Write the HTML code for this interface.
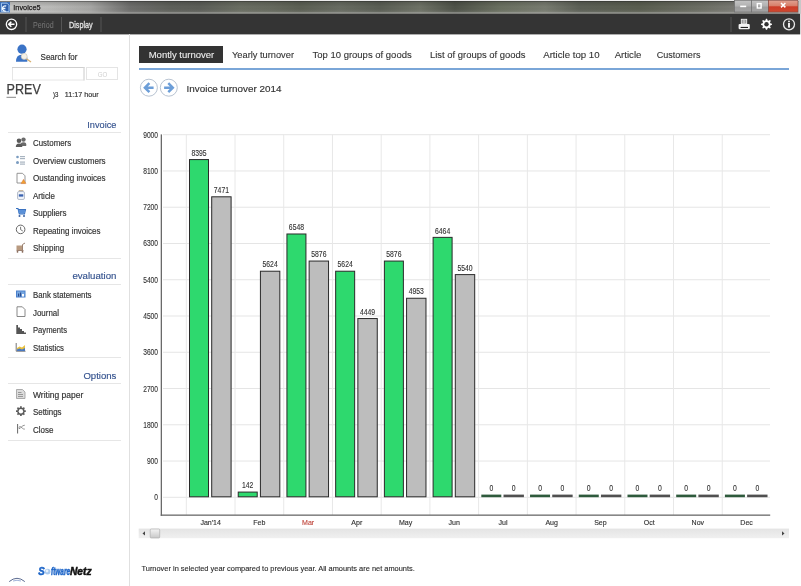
<!DOCTYPE html>
<html><head><meta charset="utf-8">
<style>
html,body{margin:0;padding:0;background:#fff;width:801px;height:586px;overflow:hidden}
svg{display:block;font-family:"Liberation Sans",sans-serif;will-change:transform}
</style></head><body>
<svg width="801" height="586" viewBox="0 0 801 586">
<defs>
<linearGradient id="tb" x1="0" y1="0" x2="801" y2="0" gradientUnits="userSpaceOnUse">
<stop offset="0.0000" stop-color="#c4c4c4"/>
<stop offset="0.0125" stop-color="#c8c8c6"/>
<stop offset="0.0624" stop-color="#bcbcba"/>
<stop offset="0.1124" stop-color="#a8a8a6"/>
<stop offset="0.1373" stop-color="#8a8a88"/>
<stop offset="0.1623" stop-color="#6e6e6c"/>
<stop offset="0.2122" stop-color="#5e605a"/>
<stop offset="0.2497" stop-color="#5c5e58"/>
<stop offset="0.2996" stop-color="#6a6e62"/>
<stop offset="0.3371" stop-color="#666a5e"/>
<stop offset="0.3745" stop-color="#5c6054"/>
<stop offset="0.4245" stop-color="#686c62"/>
<stop offset="0.4744" stop-color="#5a5e54"/>
<stop offset="0.5243" stop-color="#6e7266"/>
<stop offset="0.5680" stop-color="#4e5248"/>
<stop offset="0.6242" stop-color="#6a7060"/>
<stop offset="0.6804" stop-color="#787c70"/>
<stop offset="0.7241" stop-color="#5c6056"/>
<stop offset="0.7990" stop-color="#5a5e50"/>
<stop offset="0.8739" stop-color="#6c6e64"/>
<stop offset="0.9176" stop-color="#7a7a74"/>
<stop offset="1.0000" stop-color="#8a8a88"/>
</linearGradient>
<linearGradient id="tbv" x1="0" y1="0" x2="0" y2="1">
<stop offset="0" stop-color="#000" stop-opacity="0.18"/>
<stop offset="0.5" stop-color="#000" stop-opacity="0"/>
<stop offset="1" stop-color="#fff" stop-opacity="0.15"/>
</linearGradient>
<linearGradient id="btn" x1="0" y1="0" x2="0" y2="1">
<stop offset="0" stop-color="#c4c4c4"/><stop offset="0.5" stop-color="#b0b0b0"/><stop offset="0.55" stop-color="#9c9c9c"/><stop offset="1" stop-color="#a4a4a4"/>
</linearGradient>
<linearGradient id="cls" x1="0" y1="0" x2="0" y2="1">
<stop offset="0" stop-color="#e0a090"/><stop offset="0.45" stop-color="#d8806c"/><stop offset="0.55" stop-color="#cc3c28"/><stop offset="1" stop-color="#d04830"/>
</linearGradient>
<linearGradient id="sb" x1="0" y1="0" x2="0" y2="1">
<stop offset="0" stop-color="#e4e4e4"/><stop offset="1" stop-color="#f0f0f0"/>
</linearGradient>
<linearGradient id="thumb" x1="0" y1="0" x2="0" y2="1"><stop offset="0" stop-color="#f4f4f4"/><stop offset="1" stop-color="#c8c8c8"/></linearGradient>
</defs>

<!-- Title bar -->
<rect x="0" y="0" width="801" height="14" fill="url(#tb)"/>
<rect x="0" y="1" width="801" height="12" fill="url(#tbv)"/>
<rect x="0" y="0" width="801" height="1" fill="#ececec"/>
<rect x="0" y="1" width="801" height="1" fill="#202020" opacity="0.35"/>
<rect x="0" y="12.5" width="801" height="1.2" fill="#a4a4a2"/>
<!-- app icon -->
<rect x="0" y="2" width="10" height="10.4" fill="#3d6fb8"/>
<path d="M1.5 3.2 H7 L9 5.2 V11.6 H1.5 Z" fill="#2f5ea8" stroke="#a8cdf4" stroke-width="0.9"/>
<path d="M6.2 6.2 A2.6 2.6 0 1 0 5.8 11 M2.4 8.5 H5.4" fill="none" stroke="#f0f8ff" stroke-width="1.3"/>
<text x="13.3" y="9.8" font-size="8" fill="#1c1a1a" stroke="#1c1a1a" stroke-width="0.25" textLength="27.3" lengthAdjust="spacingAndGlyphs">Invoice5</text>
<!-- window buttons -->
<rect x="734.5" y="0.5" width="17" height="11.5" fill="url(#btn)" stroke="#707070" stroke-width="0.7"/>
<rect x="740.2" y="5.6" width="6" height="1.6" fill="#fff"/>
<rect x="751.5" y="0.5" width="17" height="11.5" fill="url(#btn)" stroke="#707070" stroke-width="0.7"/>
<rect x="757.3" y="3.6" width="3.8" height="4.4" fill="none" stroke="#fff" stroke-width="1.4"/>
<rect x="768.5" y="0.5" width="29.5" height="11.5" fill="url(#cls)" stroke="#8a4a40" stroke-width="0.7"/>
<path d="M781 3 L785.4 7.4 M785.4 3 L781 7.4" stroke="#fff" stroke-width="1.5"/>
<rect x="798.5" y="0" width="2.5" height="14" fill="#c8c8c8"/>

<!-- Toolbar -->
<rect x="0" y="13.8" width="800" height="20.6" fill="#343434"/>
<rect x="800" y="13.8" width="1" height="20.6" fill="#d8d8d8"/>
<circle cx="11.5" cy="24.3" r="5.2" fill="none" stroke="#fff" stroke-width="1.3"/>
<path d="M14.5 24.3 H9 M11.3 21.8 L8.8 24.3 L11.3 26.8" fill="none" stroke="#fff" stroke-width="1.6"/>
<rect x="25.5" y="17" width="1" height="15" fill="#555"/>
<text x="33" y="27.5" font-size="8.5" fill="#777" textLength="20.6" lengthAdjust="spacingAndGlyphs">Period</text>
<rect x="61" y="17" width="1" height="15" fill="#555"/>
<text x="69" y="27.5" font-size="8.5" fill="#dedede" stroke="#dedede" stroke-width="0.35" textLength="23.7" lengthAdjust="spacingAndGlyphs">Display</text>
<rect x="100.5" y="17" width="1" height="15" fill="#555"/>
<rect x="730.5" y="17" width="1" height="15" fill="#555"/>
<!-- printer -->
<rect x="741.3" y="19.3" width="5.4" height="4.6" fill="#9a9a9a" stroke="#f0f0f0" stroke-width="0.9"/>
<rect x="743.3" y="19.5" width="1.4" height="4" fill="#c8c8c8"/>
<rect x="738.6" y="23.9" width="11.2" height="5.3" rx="1.2" fill="#f4f4f4"/>
<rect x="740.6" y="26.9" width="7.4" height="1.1" fill="#222"/>
<!-- gear -->
<path d="M765.96 18.83 L767.04 18.83 L767.66 20.47 L768.39 20.77 L769.99 20.05 L770.75 20.81 L770.03 22.41 L770.33 23.14 L771.97 23.76 L771.97 24.84 L770.33 25.46 L770.03 26.19 L770.75 27.79 L769.99 28.55 L768.39 27.83 L767.66 28.13 L767.04 29.77 L765.96 29.77 L765.34 28.13 L764.61 27.83 L763.01 28.55 L762.25 27.79 L762.97 26.19 L762.67 25.46 L761.03 24.84 L761.03 23.76 L762.67 23.14 L762.97 22.41 L762.25 20.81 L763.01 20.05 L764.61 20.77 L765.34 20.47 Z" fill="#fff"/>
<circle cx="766.5" cy="24.3" r="2.2" fill="#343434"/>
<!-- info -->
<circle cx="789" cy="24.3" r="5.5" fill="none" stroke="#e8e8e8" stroke-width="1.3"/>
<circle cx="789" cy="21.4" r="0.9" fill="#fff"/>
<rect x="788.1" y="23" width="1.8" height="4.6" fill="#fff"/>

<!-- Sidebar -->
<rect x="129" y="34" width="1" height="552" fill="#e0e0e0"/>
<!-- search person icon -->
<circle cx="22" cy="49.2" r="4.6" fill="#3b73c6"/>
<path d="M16 61.8 Q16 55 21.5 54.8 L24 54.8 Q27.3 55.2 27.3 58 L27.3 61.8 Z" fill="#3b73c6"/>
<line x1="26" y1="58.5" x2="31" y2="62" stroke="#d8b070" stroke-width="1.4"/>
<circle cx="24.2" cy="56.4" r="3" fill="#f4f0e6" stroke="#c8c0b0" stroke-width="0.6"/>
<text x="40.6" y="60.3" font-size="8.2" fill="#333" stroke="#333" stroke-width="0.18" textLength="36.9" lengthAdjust="spacingAndGlyphs">Search for</text>
<rect x="12.5" y="67.5" width="71.5" height="12.5" fill="#fff" stroke="#e6e6e6" stroke-width="1"/>
<rect x="12" y="67" width="72.5" height="1" fill="#cfcfcf"/>
<rect x="83.5" y="67" width="1" height="13.5" fill="#d8d8d8"/>
<rect x="86.5" y="67.5" width="31" height="12" fill="#fff" stroke="#e4e4e4" stroke-width="1"/>
<text x="97.7" y="76.5" font-size="7" fill="#d0d0d0" textLength="9.5" lengthAdjust="spacingAndGlyphs">GO</text>
<text x="6.6" y="94.4" font-size="13.9" fill="#3e3e3e" stroke="#3e3e3e" stroke-width="0.25" textLength="34.2" lengthAdjust="spacingAndGlyphs">PREV</text>
<rect x="6.5" y="96.8" width="9.5" height="1" fill="#888"/>
<text x="53" y="97.3" font-size="7.6" fill="#333" stroke="#333" stroke-width="0.18" textLength="5.4" lengthAdjust="spacingAndGlyphs">)3</text>
<text x="64.7" y="97.3" font-size="7.6" fill="#333" stroke="#333" stroke-width="0.18" textLength="33.9" lengthAdjust="spacingAndGlyphs">11:17 hour</text>

<!-- Invoice section -->
<text x="116.4" y="128" font-size="9.6" fill="#34528e" stroke="#34528e" stroke-width="0.15" text-anchor="end" textLength="29.1" lengthAdjust="spacingAndGlyphs">Invoice</text>
<rect x="8" y="132" width="113" height="1" fill="#e6e6e6"/>
<g font-size="8.7" fill="#333" stroke="#333" stroke-width="0.18">
<text x="33" y="146" textLength="38.2" lengthAdjust="spacingAndGlyphs">Customers</text>
<text x="33" y="163.5" textLength="72.6" lengthAdjust="spacingAndGlyphs">Overview customers</text>
<text x="33" y="181" textLength="72.6" lengthAdjust="spacingAndGlyphs">Oustanding invoices</text>
<text x="33" y="198.5" textLength="22" lengthAdjust="spacingAndGlyphs">Article</text>
<text x="33" y="216" textLength="33.4" lengthAdjust="spacingAndGlyphs">Suppliers</text>
<text x="33" y="233.5" textLength="67.5" lengthAdjust="spacingAndGlyphs">Repeating invoices</text>
<text x="33" y="251" textLength="31.2" lengthAdjust="spacingAndGlyphs">Shipping</text>
</g>
<rect x="8" y="258" width="113" height="1" fill="#e6e6e6"/>
<text x="116.4" y="279.3" font-size="9.6" fill="#34528e" stroke="#34528e" stroke-width="0.15" text-anchor="end" textLength="44" lengthAdjust="spacingAndGlyphs">evaluation</text>
<rect x="8" y="284" width="113" height="1" fill="#e6e6e6"/>
<g font-size="8.7" fill="#333" stroke="#333" stroke-width="0.18">
<text x="33" y="298" textLength="58.5" lengthAdjust="spacingAndGlyphs">Bank statements</text>
<text x="33" y="315.5" textLength="26" lengthAdjust="spacingAndGlyphs">Journal</text>
<text x="33" y="333" textLength="34" lengthAdjust="spacingAndGlyphs">Payments</text>
<text x="33" y="350.5" textLength="31" lengthAdjust="spacingAndGlyphs">Statistics</text>
</g>
<rect x="8" y="357" width="113" height="1" fill="#e6e6e6"/>
<text x="116.4" y="379" font-size="9.6" fill="#34528e" stroke="#34528e" stroke-width="0.15" text-anchor="end" textLength="33" lengthAdjust="spacingAndGlyphs">Options</text>
<rect x="8" y="383" width="113" height="1" fill="#e6e6e6"/>
<g font-size="8.7" fill="#333" stroke="#333" stroke-width="0.18">
<text x="33" y="397.5" textLength="50.3" lengthAdjust="spacingAndGlyphs">Writing paper</text>
<text x="33" y="415" textLength="28.5" lengthAdjust="spacingAndGlyphs">Settings</text>
<text x="33" y="432.5" textLength="20.4" lengthAdjust="spacingAndGlyphs">Close</text>
</g>
<rect x="8" y="440" width="113" height="1" fill="#e6e6e6"/>


<!-- sidebar icons -->
<g id="icons">
<!-- customers: two people -->
<circle cx="23.5" cy="139.6" r="2.2" fill="#6a6a6a"/>
<path d="M19.8 146 Q20 142.3 23.5 142.3 Q27 142.3 26.2 146 Z" fill="#6a6a6a"/>
<circle cx="19" cy="140.8" r="2.3" fill="#5a5a5a"/>
<path d="M15.8 147 Q15.8 143.4 19 143.4 Q22.3 143.4 22.3 147 Z" fill="#5a5a5a"/>
<!-- overview customers -->
<circle cx="17.5" cy="157" r="1.3" fill="#7a9cc0"/>
<circle cx="17.5" cy="162.5" r="1.5" fill="#7a9cc0"/>
<rect x="20" y="156" width="5" height="1.2" fill="#a8b4c0"/>
<rect x="20" y="158" width="5" height="1.2" fill="#a8b4c0"/>
<rect x="20" y="161.5" width="5" height="1.2" fill="#a8b4c0"/>
<rect x="20" y="163.5" width="5" height="1.2" fill="#a8b4c0"/>
<!-- outstanding invoices -->
<path d="M17 173.3 H22.5 L25 175.8 V183 H17 Z" fill="#fff" stroke="#8a8a8a" stroke-width="0.9"/>
<path d="M23.5 179.3 L26 183.6 H21 Z" fill="#f0a030" stroke="#d86a30" stroke-width="0.4"/>
<!-- article jar -->
<rect x="18.8" y="190" width="4.5" height="1.6" fill="#c8b8a0"/>
<rect x="17.5" y="191.5" width="7" height="8" rx="1.5" fill="#eef2f8" stroke="#a8b0c0" stroke-width="0.8"/>
<rect x="18.8" y="194.3" width="4.5" height="2.3" fill="#3a62b0"/>
<!-- suppliers cart -->
<path d="M16 208.5 H18 L19.3 214 H24.5 L25.5 209.5 H18.5" fill="#8ab0e0" stroke="#3a72c0" stroke-width="1.1"/>
<rect x="18.5" y="210" width="6.5" height="3" fill="#5a90d8"/>
<circle cx="19.5" cy="216" r="1" fill="#3a60a0"/>
<circle cx="24" cy="216" r="1" fill="#3a60a0"/>
<!-- repeating clock -->
<circle cx="20.6" cy="229.4" r="4.3" fill="none" stroke="#666" stroke-width="1"/>
<path d="M20.6 226.8 V229.6 L22.8 231" fill="none" stroke="#666" stroke-width="0.9"/>
<!-- shipping -->
<rect x="16.5" y="245.5" width="5.5" height="4.5" fill="#b89a80"/>
<path d="M22.5 251 V244.5 L25 243" fill="none" stroke="#9a8070" stroke-width="1"/>
<rect x="16.5" y="250" width="7" height="1" fill="#9a8070"/>
<circle cx="17.5" cy="251.8" r="0.9" fill="#806050"/>
<circle cx="22.5" cy="251.8" r="0.9" fill="#806050"/>
<!-- bank statements -->
<rect x="16" y="290.5" width="9.5" height="7" fill="#4a80cc"/>
<rect x="17" y="291.5" width="7.5" height="5" fill="#78a8e0"/>
<rect x="18" y="293.5" width="1.2" height="3" fill="#2a4c90"/>
<rect x="20" y="292.5" width="1.2" height="4" fill="#2a4c90"/>
<rect x="22" y="294" width="2" height="2.5" fill="#fff"/>
<!-- journal -->
<path d="M17 306.8 H22.3 L25 309.5 V316.5 H17 Z" fill="#fff" stroke="#7a7a7a" stroke-width="0.9"/>
<!-- payments -->
<path d="M16.3 325 H18 V327.5 H20 V329 H22 V331 H24 V332.5 H26 V334 H16.3 Z" fill="#555"/>
<!-- statistics -->
<path d="M16.2 343 V351.2 H25.5" fill="none" stroke="#666" stroke-width="0.9"/>
<path d="M17 351 L17 348 L19.5 346.5 L22 347.5 L25 345 V351 Z" fill="#e8c040"/>
<path d="M17 351 L17 349.5 L19.5 348.5 L22 349.5 L25 348 V351 Z" fill="#4a78c0"/>
<!-- writing paper -->
<path d="M16.5 389.5 H22.5 L25 392 V398.5 H16.5 Z" fill="#dcdcdc" stroke="#9a9a9a" stroke-width="0.8"/>
<rect x="18" y="392" width="3.5" height="0.8" fill="#888"/>
<rect x="18" y="394" width="5" height="0.8" fill="#888"/>
<rect x="18" y="396" width="5" height="0.8" fill="#888"/>
<!-- settings gear -->
<g transform="translate(20.9 411.2)" fill="#5a5a5a">
<circle r="3.7"/>
<path d="M-0.9 -4.9 H0.9 L0.7 -3 H-0.7 Z"/>
<path d="M-0.9 -4.9 H0.9 L0.7 -3 H-0.7 Z" transform="rotate(45)"/>
<path d="M-0.9 -4.9 H0.9 L0.7 -3 H-0.7 Z" transform="rotate(90)"/>
<path d="M-0.9 -4.9 H0.9 L0.7 -3 H-0.7 Z" transform="rotate(135)"/>
<path d="M-0.9 -4.9 H0.9 L0.7 -3 H-0.7 Z" transform="rotate(180)"/>
<path d="M-0.9 -4.9 H0.9 L0.7 -3 H-0.7 Z" transform="rotate(225)"/>
<path d="M-0.9 -4.9 H0.9 L0.7 -3 H-0.7 Z" transform="rotate(270)"/>
<path d="M-0.9 -4.9 H0.9 L0.7 -3 H-0.7 Z" transform="rotate(315)"/>
<circle r="2.2" fill="#fff"/>
</g>
<!-- close -->
<rect x="17.1" y="424" width="1" height="9.5" fill="#666"/>
<path d="M24.8 425.2 Q22.8 425.2 21.2 427.3 Q20 429 19 428.5 Q18.6 427.2 19.8 426.6 Q21.2 426.6 22.5 428.3 Q23.6 429.3 24.8 429.1" fill="none" stroke="#777" stroke-width="0.8"/>
</g>

<!-- logo -->
<text x="38.3" y="574.6" font-size="10" font-weight="bold" font-style="italic" fill="#1f66c8" stroke="#1f66c8" stroke-width="0.5" textLength="6.5" lengthAdjust="spacingAndGlyphs">S</text>
<circle cx="47.6" cy="571.6" r="2.9" fill="#a8c8ee"/>
<circle cx="47" cy="571" r="1.4" fill="#e8f2fc"/>
<text x="51" y="574.6" font-size="10" font-weight="bold" font-style="italic" fill="#1f66c8" stroke="#1f66c8" stroke-width="0.5" textLength="19" lengthAdjust="spacingAndGlyphs">ftware</text>
<text x="70" y="574.6" font-size="10" font-weight="bold" font-style="italic" fill="#111" stroke="#111" stroke-width="0.5" textLength="21.5" lengthAdjust="spacingAndGlyphs">Netz</text>
<path d="M9.2 581.6 Q17 575 24.8 581.6" fill="none" stroke="#5a6a90" stroke-width="1"/>
<path d="M13 581 Q17 579.5 21 581" fill="none" stroke="#8aa0d0" stroke-width="0.8"/>

<!-- Tabs -->
<rect x="139" y="46" width="84" height="17" fill="#333"/>
<g font-size="9.9" fill="#333" stroke="#333" stroke-width="0.12">
<text x="148.7" y="57.7" fill="#ececec" stroke="#ececec" textLength="65.6" lengthAdjust="spacingAndGlyphs">Montly turnover</text>
<text x="232" y="57.7" textLength="62" lengthAdjust="spacingAndGlyphs">Yearly turnover</text>
<text x="312.5" y="57.7" textLength="99.2" lengthAdjust="spacingAndGlyphs">Top 10 groups of goods</text>
<text x="430" y="57.7" textLength="95.6" lengthAdjust="spacingAndGlyphs">List of groups of goods</text>
<text x="543.2" y="57.7" textLength="56.4" lengthAdjust="spacingAndGlyphs">Article top 10</text>
<text x="614.7" y="57.7" textLength="26.7" lengthAdjust="spacingAndGlyphs">Article</text>
<text x="656.8" y="57.7" textLength="43.6" lengthAdjust="spacingAndGlyphs">Customers</text>
</g>
<rect x="139" y="68" width="650" height="2" fill="#7aa6d8"/>

<!-- nav -->
<circle cx="148.9" cy="87.7" r="8.5" fill="#fff" stroke="#b0bccc" stroke-width="0.9"/>
<path d="M153.6 87.7 H146 M149.4 83.2 L144.9 87.7 L149.4 92.2" fill="none" stroke="#6c9ed8" stroke-width="2.5"/>
<circle cx="168.8" cy="87.7" r="8.5" fill="#fff" stroke="#b0bccc" stroke-width="0.9"/>
<path d="M164.1 87.7 H171.7 M168.3 83.2 L172.8 87.7 L168.3 92.2" fill="none" stroke="#6c9ed8" stroke-width="2.5"/>
<text x="186.6" y="92.1" font-size="9.6" fill="#333" stroke="#333" stroke-width="0.15" textLength="94.8" lengthAdjust="spacingAndGlyphs">Invoice turnover 2014</text>

<g id="chart">
<rect x="163" y="496.80" width="607" height="1" fill="#e5e5e5"/>
<rect x="163" y="460.54" width="607" height="1" fill="#e5e5e5"/>
<rect x="163" y="424.28" width="607" height="1" fill="#e5e5e5"/>
<rect x="163" y="388.02" width="607" height="1" fill="#e5e5e5"/>
<rect x="163" y="351.76" width="607" height="1" fill="#e5e5e5"/>
<rect x="163" y="315.50" width="607" height="1" fill="#e5e5e5"/>
<rect x="163" y="279.24" width="607" height="1" fill="#e5e5e5"/>
<rect x="163" y="242.98" width="607" height="1" fill="#e5e5e5"/>
<rect x="163" y="206.72" width="607" height="1" fill="#e5e5e5"/>
<rect x="163" y="170.46" width="607" height="1" fill="#e5e5e5"/>
<rect x="163" y="134.20" width="607" height="1" fill="#e5e5e5"/>
<rect x="185.80" y="134.5" width="1" height="380.5" fill="#e8e8e8"/>
<rect x="234.52" y="134.5" width="1" height="380.5" fill="#e8e8e8"/>
<rect x="283.24" y="134.5" width="1" height="380.5" fill="#e8e8e8"/>
<rect x="331.96" y="134.5" width="1" height="380.5" fill="#e8e8e8"/>
<rect x="380.68" y="134.5" width="1" height="380.5" fill="#e8e8e8"/>
<rect x="429.40" y="134.5" width="1" height="380.5" fill="#e8e8e8"/>
<rect x="478.12" y="134.5" width="1" height="380.5" fill="#e8e8e8"/>
<rect x="526.84" y="134.5" width="1" height="380.5" fill="#e8e8e8"/>
<rect x="575.56" y="134.5" width="1" height="380.5" fill="#e8e8e8"/>
<rect x="624.28" y="134.5" width="1" height="380.5" fill="#e8e8e8"/>
<rect x="673.00" y="134.5" width="1" height="380.5" fill="#e8e8e8"/>
<rect x="721.72" y="134.5" width="1" height="380.5" fill="#e8e8e8"/>
<rect x="160.7" y="134.4" width="1.3" height="381.4" fill="#6a6a6a"/>
<rect x="160.7" y="514.5" width="609.5" height="1.3" fill="#6a6a6a"/>
<text x="158" y="500.30" font-size="8.4" fill="#333" stroke="#333" stroke-width="0.12" text-anchor="end" textLength="3.7" lengthAdjust="spacingAndGlyphs">0</text>
<text x="158" y="464.04" font-size="8.4" fill="#333" stroke="#333" stroke-width="0.12" text-anchor="end" textLength="11.1" lengthAdjust="spacingAndGlyphs">900</text>
<text x="158" y="427.78" font-size="8.4" fill="#333" stroke="#333" stroke-width="0.12" text-anchor="end" textLength="14.8" lengthAdjust="spacingAndGlyphs">1800</text>
<text x="158" y="391.52" font-size="8.4" fill="#333" stroke="#333" stroke-width="0.12" text-anchor="end" textLength="14.8" lengthAdjust="spacingAndGlyphs">2700</text>
<text x="158" y="355.26" font-size="8.4" fill="#333" stroke="#333" stroke-width="0.12" text-anchor="end" textLength="14.8" lengthAdjust="spacingAndGlyphs">3600</text>
<text x="158" y="319.00" font-size="8.4" fill="#333" stroke="#333" stroke-width="0.12" text-anchor="end" textLength="14.8" lengthAdjust="spacingAndGlyphs">4500</text>
<text x="158" y="282.74" font-size="8.4" fill="#333" stroke="#333" stroke-width="0.12" text-anchor="end" textLength="14.8" lengthAdjust="spacingAndGlyphs">5400</text>
<text x="158" y="246.48" font-size="8.4" fill="#333" stroke="#333" stroke-width="0.12" text-anchor="end" textLength="14.8" lengthAdjust="spacingAndGlyphs">6300</text>
<text x="158" y="210.22" font-size="8.4" fill="#333" stroke="#333" stroke-width="0.12" text-anchor="end" textLength="14.8" lengthAdjust="spacingAndGlyphs">7200</text>
<text x="158" y="173.96" font-size="8.4" fill="#333" stroke="#333" stroke-width="0.12" text-anchor="end" textLength="14.8" lengthAdjust="spacingAndGlyphs">8100</text>
<text x="158" y="137.70" font-size="8.4" fill="#333" stroke="#333" stroke-width="0.12" text-anchor="end" textLength="14.8" lengthAdjust="spacingAndGlyphs">9000</text>
<rect x="189.50" y="159.57" width="19.00" height="337.23" fill="#2ed96e" stroke="#2a2a2a" stroke-width="1"/>
<text x="199.00" y="155.77" font-size="8.4" fill="#333" stroke="#333" stroke-width="0.12" text-anchor="middle" textLength="15.2" lengthAdjust="spacingAndGlyphs">8395</text>
<rect x="211.70" y="196.80" width="19.40" height="300.00" fill="#bdbdbd" stroke="#2a2a2a" stroke-width="1"/>
<text x="221.40" y="193.00" font-size="8.4" fill="#333" stroke="#333" stroke-width="0.12" text-anchor="middle" textLength="15.2" lengthAdjust="spacingAndGlyphs">7471</text>
<text x="210.66" y="524.9" font-size="8" fill="#333" stroke="#333" stroke-width="0.15" text-anchor="middle" textLength="20.52" lengthAdjust="spacingAndGlyphs">Jan'14</text>
<rect x="238.22" y="492.08" width="19.00" height="4.72" fill="#2ed96e" stroke="#2a2a2a" stroke-width="1"/>
<text x="247.72" y="488.28" font-size="8.4" fill="#333" stroke="#333" stroke-width="0.12" text-anchor="middle" textLength="11.4" lengthAdjust="spacingAndGlyphs">142</text>
<rect x="260.42" y="271.22" width="19.40" height="225.58" fill="#bdbdbd" stroke="#2a2a2a" stroke-width="1"/>
<text x="270.12" y="267.42" font-size="8.4" fill="#333" stroke="#333" stroke-width="0.12" text-anchor="middle" textLength="15.2" lengthAdjust="spacingAndGlyphs">5624</text>
<text x="259.38" y="524.9" font-size="8" fill="#333" stroke="#333" stroke-width="0.15" text-anchor="middle" textLength="12.13" lengthAdjust="spacingAndGlyphs">Feb</text>
<rect x="286.94" y="233.99" width="19.00" height="262.81" fill="#2ed96e" stroke="#2a2a2a" stroke-width="1"/>
<text x="296.44" y="230.19" font-size="8.4" fill="#333" stroke="#333" stroke-width="0.12" text-anchor="middle" textLength="15.2" lengthAdjust="spacingAndGlyphs">6548</text>
<rect x="309.14" y="261.06" width="19.40" height="235.74" fill="#bdbdbd" stroke="#2a2a2a" stroke-width="1"/>
<text x="318.84" y="257.26" font-size="8.4" fill="#333" stroke="#333" stroke-width="0.12" text-anchor="middle" textLength="15.2" lengthAdjust="spacingAndGlyphs">5876</text>
<text x="308.10" y="524.9" font-size="8" fill="#c04a40" stroke="#c04a40" stroke-width="0.15" text-anchor="middle" textLength="12.12" lengthAdjust="spacingAndGlyphs">Mar</text>
<rect x="335.66" y="271.22" width="19.00" height="225.58" fill="#2ed96e" stroke="#2a2a2a" stroke-width="1"/>
<text x="345.16" y="267.42" font-size="8.4" fill="#333" stroke="#333" stroke-width="0.12" text-anchor="middle" textLength="15.2" lengthAdjust="spacingAndGlyphs">5624</text>
<rect x="357.86" y="318.55" width="19.40" height="178.25" fill="#bdbdbd" stroke="#2a2a2a" stroke-width="1"/>
<text x="367.56" y="314.75" font-size="8.4" fill="#333" stroke="#333" stroke-width="0.12" text-anchor="middle" textLength="15.2" lengthAdjust="spacingAndGlyphs">4449</text>
<text x="356.82" y="524.9" font-size="8" fill="#333" stroke="#333" stroke-width="0.15" text-anchor="middle" textLength="10.95" lengthAdjust="spacingAndGlyphs">Apr</text>
<rect x="384.38" y="261.06" width="19.00" height="235.74" fill="#2ed96e" stroke="#2a2a2a" stroke-width="1"/>
<text x="393.88" y="257.26" font-size="8.4" fill="#333" stroke="#333" stroke-width="0.12" text-anchor="middle" textLength="15.2" lengthAdjust="spacingAndGlyphs">5876</text>
<rect x="406.58" y="298.25" width="19.40" height="198.55" fill="#bdbdbd" stroke="#2a2a2a" stroke-width="1"/>
<text x="416.28" y="294.45" font-size="8.4" fill="#333" stroke="#333" stroke-width="0.12" text-anchor="middle" textLength="15.2" lengthAdjust="spacingAndGlyphs">4953</text>
<text x="405.54" y="524.9" font-size="8" fill="#333" stroke="#333" stroke-width="0.15" text-anchor="middle" textLength="13.30" lengthAdjust="spacingAndGlyphs">May</text>
<rect x="433.10" y="237.37" width="19.00" height="259.43" fill="#2ed96e" stroke="#2a2a2a" stroke-width="1"/>
<text x="442.60" y="233.57" font-size="8.4" fill="#333" stroke="#333" stroke-width="0.12" text-anchor="middle" textLength="15.2" lengthAdjust="spacingAndGlyphs">6464</text>
<rect x="455.30" y="274.60" width="19.40" height="222.20" fill="#bdbdbd" stroke="#2a2a2a" stroke-width="1"/>
<text x="465.00" y="270.80" font-size="8.4" fill="#333" stroke="#333" stroke-width="0.12" text-anchor="middle" textLength="15.2" lengthAdjust="spacingAndGlyphs">5540</text>
<text x="454.26" y="524.9" font-size="8" fill="#333" stroke="#333" stroke-width="0.15" text-anchor="middle" textLength="11.35" lengthAdjust="spacingAndGlyphs">Jun</text>
<rect x="481.32" y="494.6" width="20.00" height="2.6" fill="#2e5a3c"/>
<text x="491.32" y="491.30" font-size="8.4" fill="#333" stroke="#333" stroke-width="0.12" text-anchor="middle" textLength="3.8" lengthAdjust="spacingAndGlyphs">0</text>
<rect x="503.52" y="494.6" width="20.40" height="2.6" fill="#505050"/>
<text x="513.72" y="491.30" font-size="8.4" fill="#333" stroke="#333" stroke-width="0.12" text-anchor="middle" textLength="3.8" lengthAdjust="spacingAndGlyphs">0</text>
<text x="502.98" y="524.9" font-size="8" fill="#333" stroke="#333" stroke-width="0.15" text-anchor="middle" textLength="9.00" lengthAdjust="spacingAndGlyphs">Jul</text>
<rect x="530.04" y="494.6" width="20.00" height="2.6" fill="#2e5a3c"/>
<text x="540.04" y="491.30" font-size="8.4" fill="#333" stroke="#333" stroke-width="0.12" text-anchor="middle" textLength="3.8" lengthAdjust="spacingAndGlyphs">0</text>
<rect x="552.24" y="494.6" width="20.40" height="2.6" fill="#505050"/>
<text x="562.44" y="491.30" font-size="8.4" fill="#333" stroke="#333" stroke-width="0.12" text-anchor="middle" textLength="3.8" lengthAdjust="spacingAndGlyphs">0</text>
<text x="551.70" y="524.9" font-size="8" fill="#333" stroke="#333" stroke-width="0.15" text-anchor="middle" textLength="12.53" lengthAdjust="spacingAndGlyphs">Aug</text>
<rect x="578.76" y="494.6" width="20.00" height="2.6" fill="#2e5a3c"/>
<text x="588.76" y="491.30" font-size="8.4" fill="#333" stroke="#333" stroke-width="0.12" text-anchor="middle" textLength="3.8" lengthAdjust="spacingAndGlyphs">0</text>
<rect x="600.96" y="494.6" width="20.40" height="2.6" fill="#505050"/>
<text x="611.16" y="491.30" font-size="8.4" fill="#333" stroke="#333" stroke-width="0.12" text-anchor="middle" textLength="3.8" lengthAdjust="spacingAndGlyphs">0</text>
<text x="600.42" y="524.9" font-size="8" fill="#333" stroke="#333" stroke-width="0.15" text-anchor="middle" textLength="12.53" lengthAdjust="spacingAndGlyphs">Sep</text>
<rect x="627.48" y="494.6" width="20.00" height="2.6" fill="#2e5a3c"/>
<text x="637.48" y="491.30" font-size="8.4" fill="#333" stroke="#333" stroke-width="0.12" text-anchor="middle" textLength="3.8" lengthAdjust="spacingAndGlyphs">0</text>
<rect x="649.68" y="494.6" width="20.40" height="2.6" fill="#505050"/>
<text x="659.88" y="491.30" font-size="8.4" fill="#333" stroke="#333" stroke-width="0.12" text-anchor="middle" textLength="3.8" lengthAdjust="spacingAndGlyphs">0</text>
<text x="649.14" y="524.9" font-size="8" fill="#333" stroke="#333" stroke-width="0.15" text-anchor="middle" textLength="10.95" lengthAdjust="spacingAndGlyphs">Oct</text>
<rect x="676.20" y="494.6" width="20.00" height="2.6" fill="#2e5a3c"/>
<text x="686.20" y="491.30" font-size="8.4" fill="#333" stroke="#333" stroke-width="0.12" text-anchor="middle" textLength="3.8" lengthAdjust="spacingAndGlyphs">0</text>
<rect x="698.40" y="494.6" width="20.40" height="2.6" fill="#505050"/>
<text x="708.60" y="491.30" font-size="8.4" fill="#333" stroke="#333" stroke-width="0.12" text-anchor="middle" textLength="3.8" lengthAdjust="spacingAndGlyphs">0</text>
<text x="697.86" y="524.9" font-size="8" fill="#333" stroke="#333" stroke-width="0.15" text-anchor="middle" textLength="12.52" lengthAdjust="spacingAndGlyphs">Nov</text>
<rect x="724.92" y="494.6" width="20.00" height="2.6" fill="#2e5a3c"/>
<text x="734.92" y="491.30" font-size="8.4" fill="#333" stroke="#333" stroke-width="0.12" text-anchor="middle" textLength="3.8" lengthAdjust="spacingAndGlyphs">0</text>
<rect x="747.12" y="494.6" width="20.40" height="2.6" fill="#505050"/>
<text x="757.32" y="491.30" font-size="8.4" fill="#333" stroke="#333" stroke-width="0.12" text-anchor="middle" textLength="3.8" lengthAdjust="spacingAndGlyphs">0</text>
<text x="746.58" y="524.9" font-size="8" fill="#333" stroke="#333" stroke-width="0.15" text-anchor="middle" textLength="12.52" lengthAdjust="spacingAndGlyphs">Dec</text>
<rect x="138.7" y="528.6" width="650.3" height="9.6" fill="url(#sb)"/>
<path d="M142.5 533.4 L145 531.2 V535.6 Z" fill="#444"/>
<path d="M784.5 533.4 L782 531.2 V535.6 Z" fill="#444"/>
<rect x="150.2" y="529" width="9.5" height="9" rx="1" fill="url(#thumb)" stroke="#a8a8a8" stroke-width="0.6"/>
</g>

<!-- footer -->
<text x="141.5" y="570.8" font-size="8" fill="#2a2a2a" stroke="#2a2a2a" stroke-width="0.12" textLength="273.3" lengthAdjust="spacingAndGlyphs">Turnover in selected year compared to previous year. All amounts are net amounts.</text>
</svg>
</body></html>
